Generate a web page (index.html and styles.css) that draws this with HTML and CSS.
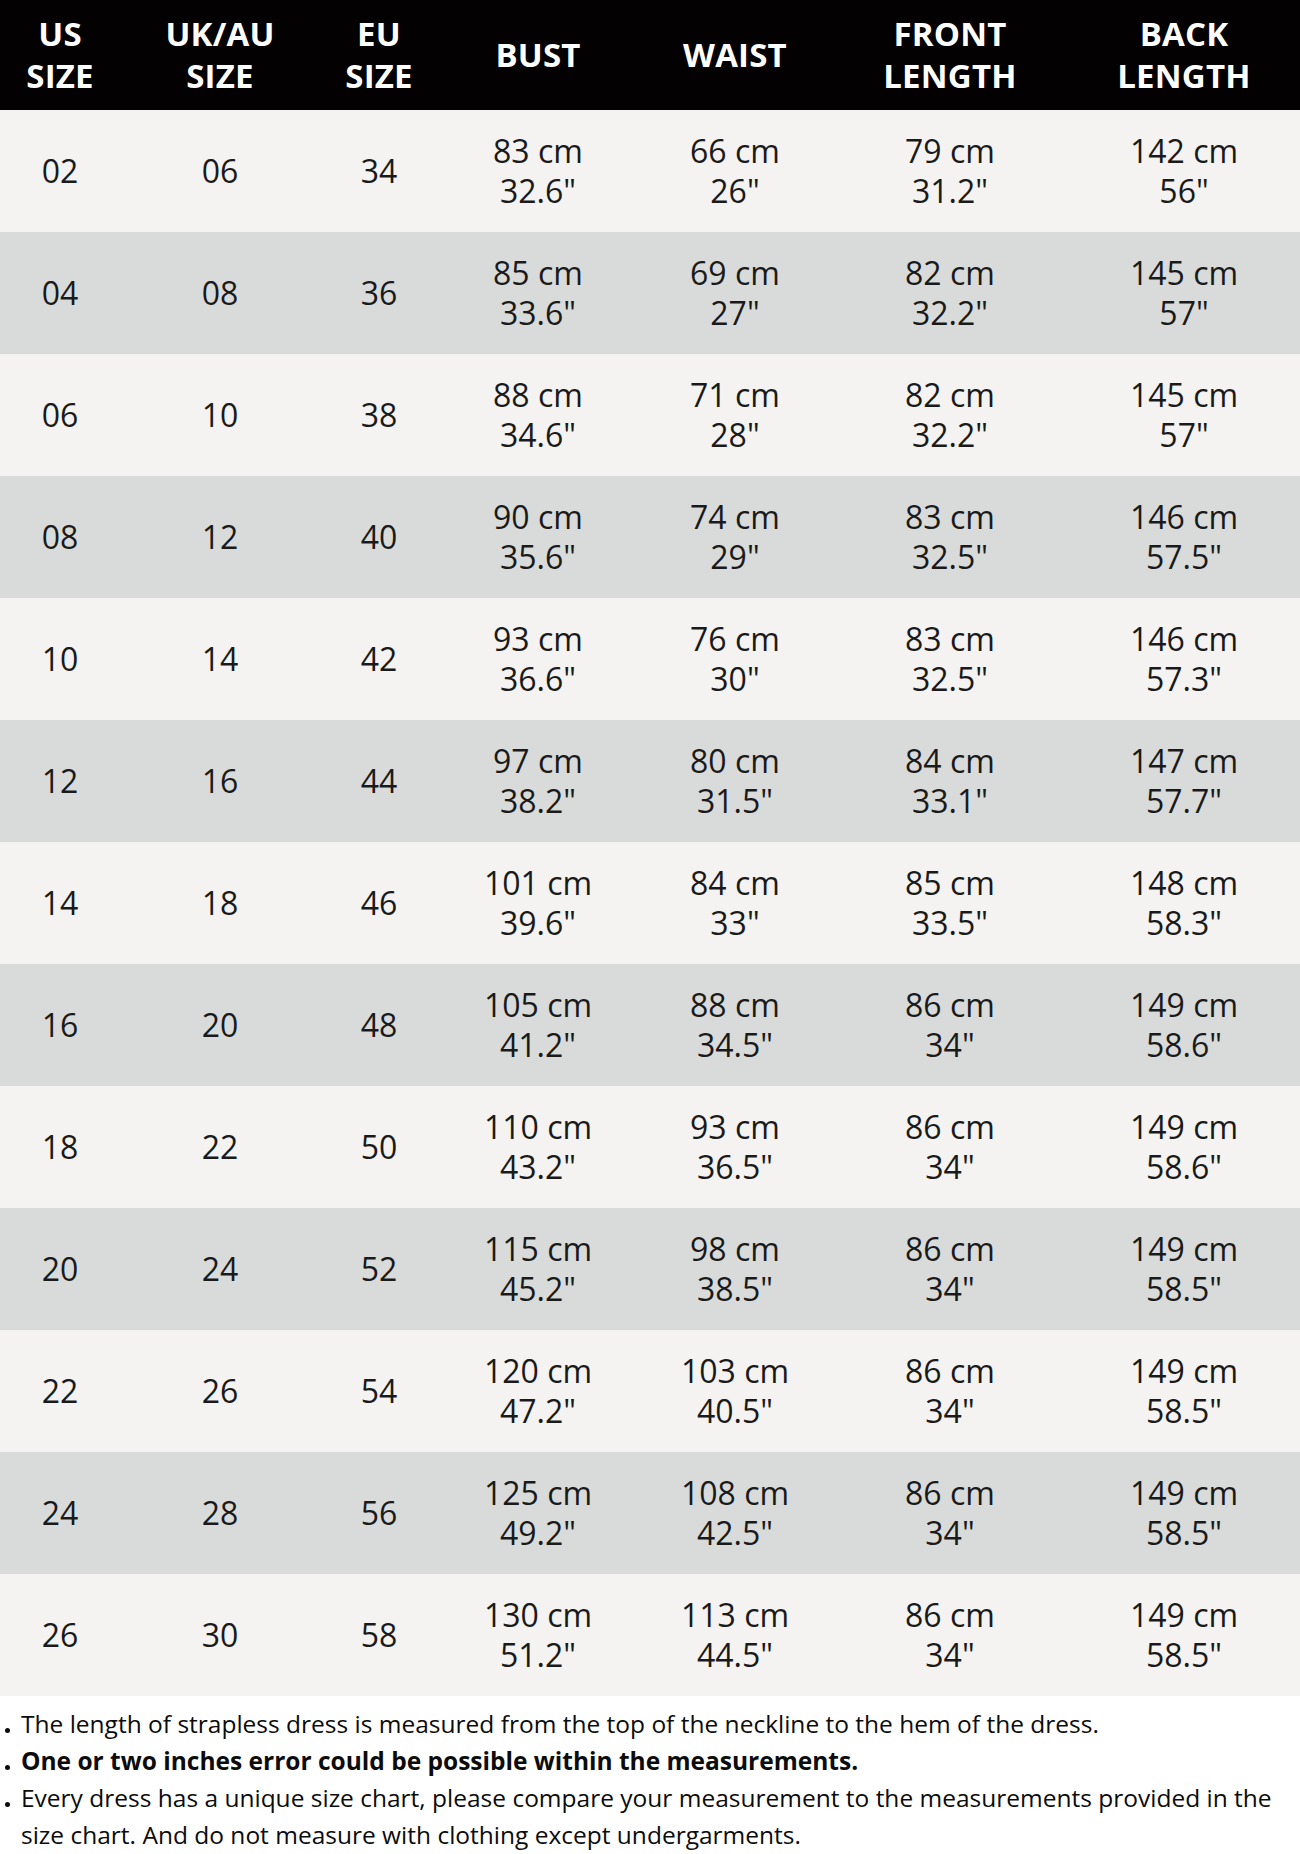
FILE: index.html
```html
<!DOCTYPE html>
<html lang="en">
<head>
<meta charset="utf-8">
<title>Size Chart</title>
<link rel="stylesheet" href="styles.css">
</head>
<body>
<div class="chart">
  <div class="row head">
    <div class="cell">US<br>SIZE</div>
    <div class="cell">UK/AU<br>SIZE</div>
    <div class="cell">EU<br>SIZE</div>
    <div class="cell">BUST</div>
    <div class="cell">WAIST</div>
    <div class="cell">FRONT<br>LENGTH</div>
    <div class="cell">BACK<br>LENGTH</div>
  </div>
  <div class="row light"><div class="cell">02</div><div class="cell">06</div><div class="cell">34</div><div class="cell">83 cm<br>32.6"</div><div class="cell">66 cm<br>26"</div><div class="cell">79 cm<br>31.2"</div><div class="cell">142 cm<br>56"</div></div>
  <div class="row grey"><div class="cell">04</div><div class="cell">08</div><div class="cell">36</div><div class="cell">85 cm<br>33.6"</div><div class="cell">69 cm<br>27"</div><div class="cell">82 cm<br>32.2"</div><div class="cell">145 cm<br>57"</div></div>
  <div class="row light"><div class="cell">06</div><div class="cell">10</div><div class="cell">38</div><div class="cell">88 cm<br>34.6"</div><div class="cell">71 cm<br>28"</div><div class="cell">82 cm<br>32.2"</div><div class="cell">145 cm<br>57"</div></div>
  <div class="row grey"><div class="cell">08</div><div class="cell">12</div><div class="cell">40</div><div class="cell">90 cm<br>35.6"</div><div class="cell">74 cm<br>29"</div><div class="cell">83 cm<br>32.5"</div><div class="cell">146 cm<br>57.5"</div></div>
  <div class="row light"><div class="cell">10</div><div class="cell">14</div><div class="cell">42</div><div class="cell">93 cm<br>36.6"</div><div class="cell">76 cm<br>30"</div><div class="cell">83 cm<br>32.5"</div><div class="cell">146 cm<br>57.3"</div></div>
  <div class="row grey"><div class="cell">12</div><div class="cell">16</div><div class="cell">44</div><div class="cell">97 cm<br>38.2"</div><div class="cell">80 cm<br>31.5"</div><div class="cell">84 cm<br>33.1"</div><div class="cell">147 cm<br>57.7"</div></div>
  <div class="row light"><div class="cell">14</div><div class="cell">18</div><div class="cell">46</div><div class="cell">101 cm<br>39.6"</div><div class="cell">84 cm<br>33"</div><div class="cell">85 cm<br>33.5"</div><div class="cell">148 cm<br>58.3"</div></div>
  <div class="row grey"><div class="cell">16</div><div class="cell">20</div><div class="cell">48</div><div class="cell">105 cm<br>41.2"</div><div class="cell">88 cm<br>34.5"</div><div class="cell">86 cm<br>34"</div><div class="cell">149 cm<br>58.6"</div></div>
  <div class="row light"><div class="cell">18</div><div class="cell">22</div><div class="cell">50</div><div class="cell">110 cm<br>43.2"</div><div class="cell">93 cm<br>36.5"</div><div class="cell">86 cm<br>34"</div><div class="cell">149 cm<br>58.6"</div></div>
  <div class="row grey"><div class="cell">20</div><div class="cell">24</div><div class="cell">52</div><div class="cell">115 cm<br>45.2"</div><div class="cell">98 cm<br>38.5"</div><div class="cell">86 cm<br>34"</div><div class="cell">149 cm<br>58.5"</div></div>
  <div class="row light"><div class="cell">22</div><div class="cell">26</div><div class="cell">54</div><div class="cell">120 cm<br>47.2"</div><div class="cell">103 cm<br>40.5"</div><div class="cell">86 cm<br>34"</div><div class="cell">149 cm<br>58.5"</div></div>
  <div class="row grey"><div class="cell">24</div><div class="cell">28</div><div class="cell">56</div><div class="cell">125 cm<br>49.2"</div><div class="cell">108 cm<br>42.5"</div><div class="cell">86 cm<br>34"</div><div class="cell">149 cm<br>58.5"</div></div>
  <div class="row light"><div class="cell">26</div><div class="cell">30</div><div class="cell">58</div><div class="cell">130 cm<br>51.2"</div><div class="cell">113 cm<br>44.5"</div><div class="cell">86 cm<br>34"</div><div class="cell">149 cm<br>58.5"</div></div>
</div>
<ul class="notes">
  <li>The length of strapless dress is measured from the top of the neckline to the hem of the dress.</li>
  <li class="strong">One or two inches error could be possible within the measurements.</li>
  <li>Every dress has a unique size chart, please compare your measurement to the measurements provided in the<br>size chart. And do not measure with clothing except undergarments.</li>
</ul>
</body>
</html>
```
FILE: styles.css
```css
html, body {
  margin: 0;
  padding: 0;
  background: #ffffff;
}

body {
  width: 1300px;
  font-family: "Open Sans", "Noto Sans", "DejaVu Sans", sans-serif;
  color: #1a1a1a;
}

.chart {
  display: flex;
  flex-direction: column;
}

.row {
  display: grid;
  grid-template-columns: 120px 200px 118px 200px 194px 236px 232px;
  height: 122px;
}

.cell {
  display: flex;
  align-items: center;
  justify-content: center;
  text-align: center;
  font-size: 32px;
  line-height: 40px;
}

.head {
  height: 110px;
  background: #030102;
  color: #ffffff;
}

.head .cell {
  font-weight: 700;
  font-size: 33px;
  line-height: 42px;
  letter-spacing: 0.2px;
}

.light {
  background: #f4f3f1;
}

.grey {
  background: #d9dbda;
}

.notes {
  list-style: none;
  margin: 0;
  padding: 9px 0 0 21px;
  font-size: 24.5px;
  line-height: 37px;
  color: #0c0c0c;
}

.notes li {
  position: relative;
}

.notes li::before {
  content: "";
  position: absolute;
  left: -16px;
  top: 23px;
  width: 5px;
  height: 5px;
  border-radius: 50%;
  background: #0c0c0c;
}

.notes .strong {
  font-weight: 700;
}
```
